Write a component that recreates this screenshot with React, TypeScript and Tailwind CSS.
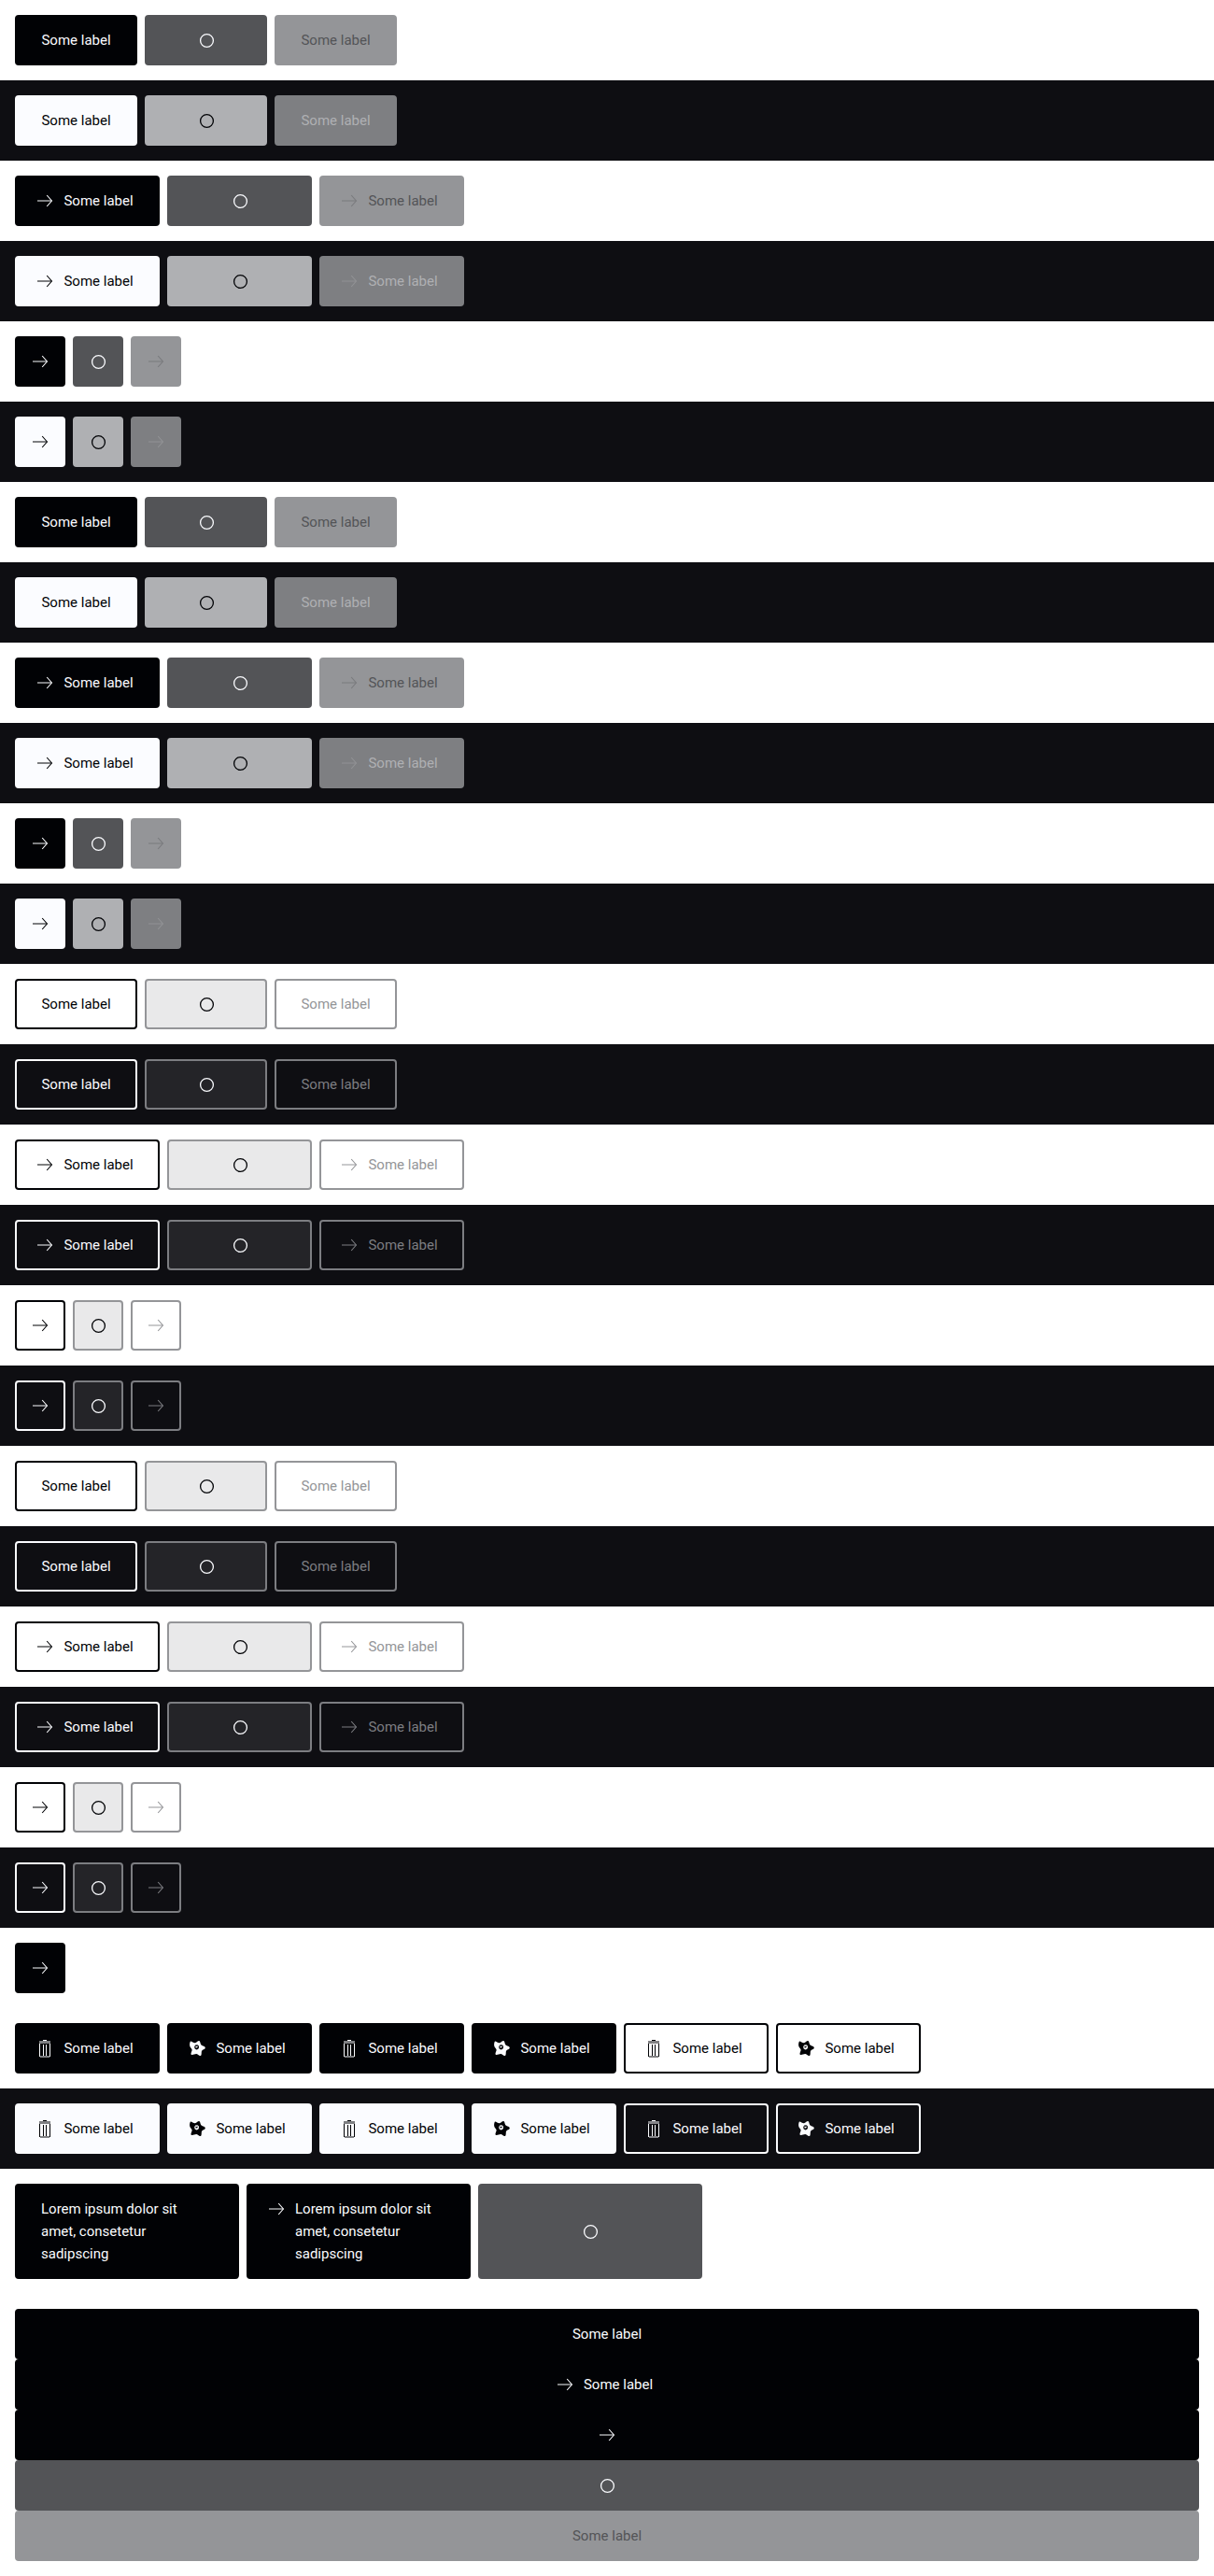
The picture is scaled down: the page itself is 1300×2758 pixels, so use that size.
import React from "react";

type IconName = "arrow" | "trash" | "star";
type State = "normal" | "loading" | "disabled";
type Variant = "solid" | "outline";

const label = "Some label";
const lorem = "Lorem ipsum dolor sit amet, consetetur sadipscing";

function Arrow() {
  return (
    <svg viewBox="0 0 24 24" className="size-6 shrink-0" fill="none" stroke="currentColor" aria-hidden="true">
      <path d="M4 12H19.5" strokeWidth="1" />
      <path d="M14.2 6L19.4 12L14.2 18" strokeWidth="1.1" />
    </svg>
  );
}

function Trash() {
  return (
    <svg viewBox="0 0 24 24" className="size-6 shrink-0" fill="currentColor" aria-hidden="true">
      <path d="M10 3h4v1h-4z" />
      <path d="M6 4h12v3H6z" opacity=".5" />
      <path d="M6 7h1v14H6zM17 7h1v14h-1zM10 8h1v12h-1zM13 8h1v12h-1z" />
      <path d="M7 20h10v2H7z" opacity=".5" />
    </svg>
  );
}

function Star() {
  return (
    <svg viewBox="0 0 24 24" className="size-6 shrink-0" aria-hidden="true">
      <path
        fill="currentColor"
        fillRule="evenodd"
        d="M5 4.4C6.6 4.4 8.4 6.4 10 6.2C11.6 6 12.6 4 14.2 4.1C15.7 4.4 15.3 7.4 16.6 8.6C17.8 9.6 20.9 9.9 20.8 11.6C20.8 13.2 17.6 13.5 17 15C16.5 16.4 17.2 19.4 15.8 20C14.4 20.5 12.6 18.2 11.2 18.1C9.6 18 7.2 19.6 5.8 18.8C4.8 17.8 6.8 15.2 6.6 13.6C6.3 12 4.4 10.8 4.2 9.2C4 7.6 4.2 5.4 5 4.4ZM10.2 8.5L9.2 10.2L9.5 12.3L11.2 13.6L13 13.1L14 11.6L13.8 9.2L12.4 8.3ZM10.6 9.5L11.8 10L12.8 9.4L12.6 10.8L11.4 11.6L10.4 11.2Z"
      />
    </svg>
  );
}

function Spinner() {
  return (
    <svg viewBox="0 0 24 24" className="size-6 shrink-0" fill="none" stroke="currentColor" aria-hidden="true">
      <circle cx="12.5" cy="12.5" r="6.9" strokeWidth="1.3" />
    </svg>
  );
}

const icons = { arrow: Arrow, trash: Trash, star: Star };

const tones: Record<string, string> = {
  "solid-light-normal": "border-[#010205] bg-[#010205] text-[#fbfcff]",
  "solid-light-loading": "border-[#535457] bg-[#535457] text-[#fbfcff]",
  "solid-light-disabled": "border-[#949598] bg-[#949598] text-[#535457]",
  "solid-dark-normal": "border-[#fbfcff] bg-[#fbfcff] text-[#010205]",
  "solid-dark-loading": "border-[#afb0b3] bg-[#afb0b3] text-[#010205]",
  "solid-dark-disabled": "border-[#7e7f82] bg-[#7e7f82] text-[#afb0b3]",
  "outline-light-normal": "border-[#010205] text-[#010205]",
  "outline-light-loading": "border-[#949598] bg-[#e9e9ea] text-[#010205]",
  "outline-light-disabled": "border-[#949598] text-[#949598]",
  "outline-dark-normal": "border-[#fbfcff] text-[#fbfcff]",
  "outline-dark-loading": "border-[#7c7d81] bg-[#242428] text-[#fbfcff]",
  "outline-dark-disabled": "border-[#7c7d81] text-[#7c7d81]",
};

interface ButtonProps {
  variant?: Variant;
  dark?: boolean;
  state?: State;
  icon?: IconName;
  hideLabel?: boolean;
  text?: string;
  size?: string;
}

function Button({ variant = "solid", dark = false, state = "normal", icon, hideLabel, text = label, size }: ButtonProps) {
  const tone = tones[`${variant}-${dark ? "dark" : "light"}-${state}`];
  const loading = state === "loading";
  const bare = loading || hideLabel;
  const Icon = icon ? icons[icon] : null;
  const width = size ?? (hideLabel ? "" : icon ? "min-w-[155px]" : "min-w-[131px]");
  const padding = bare ? "px-[13px]" : icon ? "pl-[18px] pr-[26px]" : "px-[26px]";
  return (
    <button
      type="button"
      disabled={state === "disabled"}
      aria-busy={loading}
      aria-label={bare ? text : undefined}
      className={`flex justify-center gap-2 rounded-sm border-2 py-[13px] text-left text-[15px] leading-6 ${loading ? "items-center" : "items-start"} ${width} ${padding} ${tone}`}
    >
      {loading ? (
        <Spinner />
      ) : (
        <>
          {Icon && (
            <span className={state === "disabled" && variant === "solid" ? "opacity-40" : ""}>
              <Icon />
            </span>
          )}
          {!hideLabel && <span>{text}</span>}
        </>
      )}
    </button>
  );
}

function Row({ dark, children }: { dark?: boolean; children: React.ReactNode }) {
  return <div className={`flex flex-wrap gap-2 p-4 ${dark ? "bg-[#0e0e12]" : "bg-white"}`}>{children}</div>;
}

const states: State[] = ["normal", "loading", "disabled"];
const groups: Variant[] = ["solid", "solid", "outline", "outline"];
const contents: { icon?: IconName; hideLabel?: boolean }[] = [{}, { icon: "arrow" }, { icon: "arrow", hideLabel: true }];
const themes = [false, true];
const iconButtons: { variant: Variant; icon: IconName }[] = [
  { variant: "solid", icon: "trash" },
  { variant: "solid", icon: "star" },
  { variant: "solid", icon: "trash" },
  { variant: "solid", icon: "star" },
  { variant: "outline", icon: "trash" },
  { variant: "outline", icon: "star" },
];

export default function App() {
  return (
    <main className="bg-white font-[Roboto,sans-serif]">
      {groups.map((variant, g) =>
        contents.map((content, c) =>
          themes.map((dark) => (
            <Row key={`${g}-${c}-${dark}`} dark={dark}>
              {states.map((state) => (
                <Button key={state} variant={variant} dark={dark} state={state} {...content} />
              ))}
            </Row>
          )),
        ),
      )}
      <Row>
        <Button icon="arrow" hideLabel />
      </Row>
      {themes.map((dark) => (
        <Row key={String(dark)} dark={dark}>
          {iconButtons.map((b, i) => (
            <Button key={i} dark={dark} {...b} />
          ))}
        </Row>
      ))}
      <Row>
        <Button text={lorem} size="w-60" />
        <Button text={lorem} icon="arrow" size="w-60" />
        <Button text={lorem} state="loading" size="w-60" />
      </Row>
      <div className="flex flex-col p-4">
        <Button size="w-full" />
        <Button size="w-full" icon="arrow" />
        <Button size="w-full" icon="arrow" hideLabel />
        <Button size="w-full" state="loading" />
        <Button size="w-full" state="disabled" />
      </div>
    </main>
  );
}
